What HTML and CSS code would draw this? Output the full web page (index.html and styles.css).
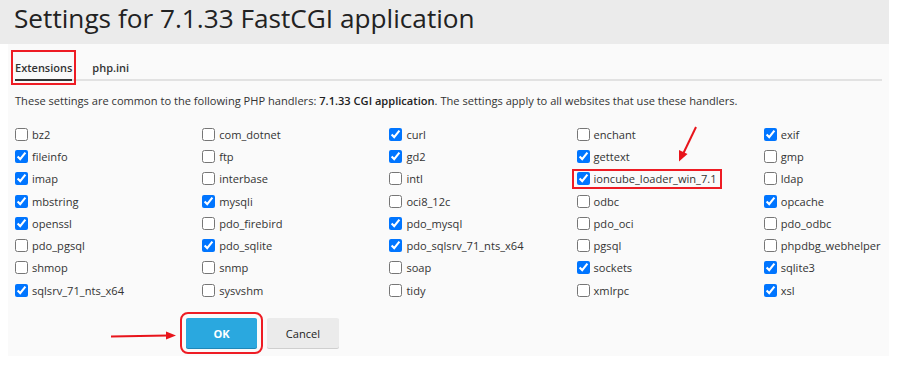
FILE: index.html
```html
<!DOCTYPE html>
<html>
<head>
<meta charset="utf-8">
<link rel="stylesheet" href="styles.css">
</head>
<body>
<div class="page">
  <header class="header">
    <h1 class="title">Settings for 7.1.33 FastCGI application</h1>
  </header>
  <section class="panel">
    <nav class="tabs">
      <span class="tab tab-active">Extensions</span>
      <span class="tab">php.ini</span>
    </nav>
    <p class="desc">These settings are common to the following PHP handlers: <b>7.1.33 CGI application</b>. The settings apply to all websites that use these handlers.</p>
    <div class="grid">
      <label class="item"><input type="checkbox"><span>bz2</span></label>
      <label class="item"><input type="checkbox"><span>com_dotnet</span></label>
      <label class="item"><input type="checkbox" checked><span>curl</span></label>
      <label class="item"><input type="checkbox"><span>enchant</span></label>
      <label class="item"><input type="checkbox" checked><span>exif</span></label>

      <label class="item"><input type="checkbox" checked><span>fileinfo</span></label>
      <label class="item"><input type="checkbox"><span>ftp</span></label>
      <label class="item"><input type="checkbox" checked><span>gd2</span></label>
      <label class="item"><input type="checkbox" checked><span>gettext</span></label>
      <label class="item"><input type="checkbox"><span>gmp</span></label>

      <label class="item"><input type="checkbox" checked><span>imap</span></label>
      <label class="item"><input type="checkbox"><span>interbase</span></label>
      <label class="item"><input type="checkbox"><span>intl</span></label>
      <label class="item mark"><input type="checkbox" checked><span>ioncube_loader_win_7.1</span></label>
      <label class="item"><input type="checkbox"><span>ldap</span></label>

      <label class="item"><input type="checkbox" checked><span>mbstring</span></label>
      <label class="item"><input type="checkbox" checked><span>mysqli</span></label>
      <label class="item"><input type="checkbox"><span>oci8_12c</span></label>
      <label class="item"><input type="checkbox"><span>odbc</span></label>
      <label class="item"><input type="checkbox" checked><span>opcache</span></label>

      <label class="item"><input type="checkbox" checked><span>openssl</span></label>
      <label class="item"><input type="checkbox"><span>pdo_firebird</span></label>
      <label class="item"><input type="checkbox" checked><span>pdo_mysql</span></label>
      <label class="item"><input type="checkbox"><span>pdo_oci</span></label>
      <label class="item"><input type="checkbox"><span>pdo_odbc</span></label>

      <label class="item"><input type="checkbox"><span>pdo_pgsql</span></label>
      <label class="item"><input type="checkbox" checked><span>pdo_sqlite</span></label>
      <label class="item"><input type="checkbox" checked><span>pdo_sqlsrv_71_nts_x64</span></label>
      <label class="item"><input type="checkbox"><span>pgsql</span></label>
      <label class="item"><input type="checkbox"><span>phpdbg_webhelper</span></label>

      <label class="item"><input type="checkbox"><span>shmop</span></label>
      <label class="item"><input type="checkbox"><span>snmp</span></label>
      <label class="item"><input type="checkbox"><span>soap</span></label>
      <label class="item"><input type="checkbox" checked><span>sockets</span></label>
      <label class="item"><input type="checkbox" checked><span>sqlite3</span></label>

      <label class="item"><input type="checkbox" checked><span>sqlsrv_71_nts_x64</span></label>
      <label class="item"><input type="checkbox"><span>sysvshm</span></label>
      <label class="item"><input type="checkbox"><span>tidy</span></label>
      <label class="item"><input type="checkbox"><span>xmlrpc</span></label>
      <label class="item"><input type="checkbox" checked><span>xsl</span></label>
    </div>
    <div class="actions">
      <button class="btn btn-ok">OK</button>
      <button class="btn btn-cancel">Cancel</button>
    </div>
  </section>

  <svg class="arrow arrow-ok" width="70" height="12" viewBox="0 0 70 12">
    <line x1="1" y1="6.5" x2="58" y2="5.5" stroke="#e8141b" stroke-width="2"/>
    <polygon points="56,1.5 66,5.5 56,9.5" fill="#e8141b"/>
  </svg>
  <svg class="arrow arrow-ion" width="24" height="38" viewBox="0 0 24 38">
    <line x1="20" y1="1" x2="7.5" y2="27" stroke="#e8141b" stroke-width="2"/>
    <polygon points="3,24 11.5,28 3,35.5" fill="#e8141b"/>
  </svg>
</div>
</body>
</html>
```

FILE: styles.css
```css
* { box-sizing: border-box; }

body {
  margin: 0;
  background: #ffffff;
  font-family: "Open Sans", "Liberation Sans", sans-serif;
  color: #333;
}

.page {
  position: relative;
  width: 889px;
}

.header {
  background: #ebebeb;
  height: 44px;
  padding: 0 14px;
}

.title {
  margin: 0;
  font-size: 26.2px;
  font-weight: 400;
  line-height: 36px;
  color: #222;
}

.panel {
  margin-left: 8px;
  background: #fafafa;
  height: 312px;
  padding: 10px 7px 0;
}

.tabs {
  display: flex;
  gap: 20px;
  border-bottom: 2px solid #e2e2e2;
}

.tab {
  font-size: 11px;
  font-weight: 600;
  line-height: 16px;
  padding: 6px 0 3px;
  color: #333;
  margin-bottom: -2px;
  border-bottom: 2px solid transparent;
}

.tab-active {
  border-bottom-color: #333;
  outline: 2px solid #ee1c24;
  outline-offset: 2px;
}

.desc {
  margin: 12px 0 0;
  font-size: 11.1px;
  line-height: 16px;
  color: #333;
}

.desc b { color: #222; font-weight: 600; }

.grid {
  margin-top: 14px;
  display: grid;
  grid-template-columns: repeat(4, 187.2px) 1fr;
  grid-auto-rows: 22.3px;
}

.item {
  display: flex;
  align-items: center;
  font-size: 11.1px;
  color: #333;
  white-space: nowrap;
}

.item input {
  margin: 0 4px 0 0;
  width: 13px;
  height: 13px;
  flex: none;
}

.item.mark {
  justify-self: start;
  align-self: center;
  height: 16px;
  margin-left: -3px;
  padding: 0 3px;
  outline: 2px solid #ee1c24;
}

.actions {
  display: flex;
  gap: 10px;
  margin-top: 17px;
  padding-left: 171px;
}

.btn {
  font-family: "Open Sans", "Liberation Sans", sans-serif;
  font-size: 11.1px;
  height: 30px;
  border: 0;
  border-radius: 2px;
  cursor: pointer;
}

.btn-ok {
  width: 71px;
  background: #2aa8df;
  color: #fff;
  font-weight: 700;
  box-shadow: 0 1px 0 #1d87b8;
  outline: 2px solid #ee1c24;
  outline-offset: 4px;
}

.btn-cancel {
  width: 72px;
  background: #ebebeb;
  color: #222;
  font-weight: 500;
  box-shadow: 0 1px 0 #cfcfcf;
}

.arrow {
  position: absolute;
}

.arrow-ok {
  left: 110px;
  top: 330px;
}

.arrow-ion {
  left: 676px;
  top: 126px;
}
```
